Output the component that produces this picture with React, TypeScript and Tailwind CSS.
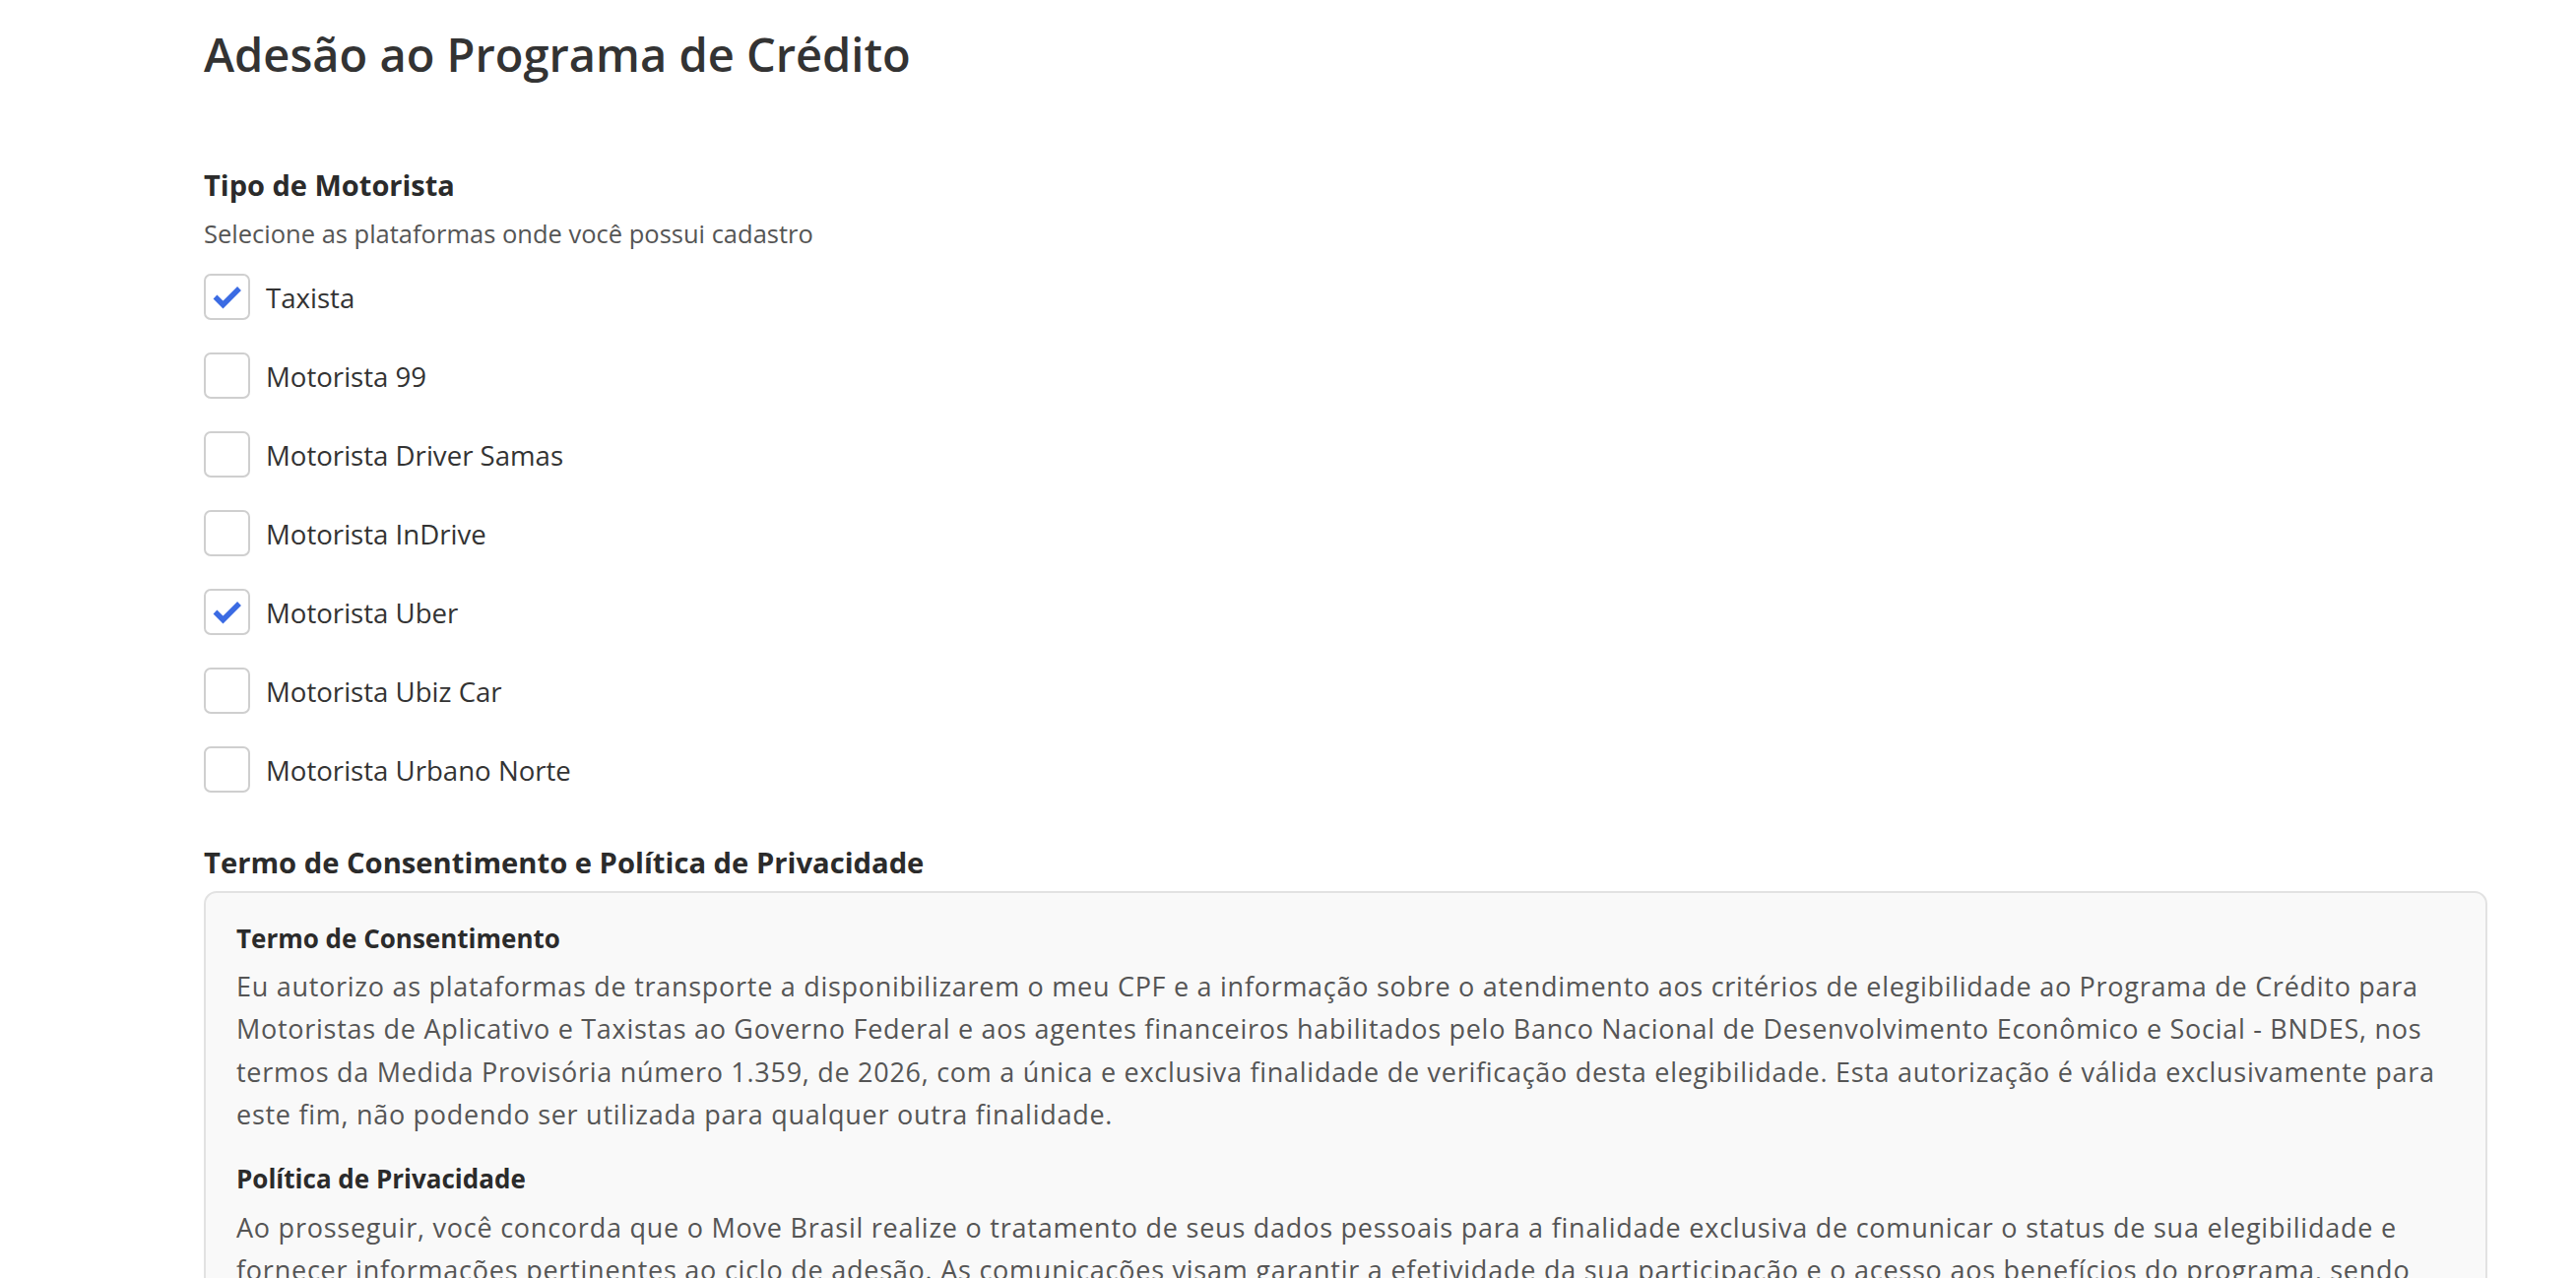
import React from "react";

const options: { label: string; checked: boolean }[] = [
  { label: "Taxista", checked: true },
  { label: "Motorista 99", checked: false },
  { label: "Motorista Driver Samas", checked: false },
  { label: "Motorista InDrive", checked: false },
  { label: "Motorista Uber", checked: true },
  { label: "Motorista Ubiz Car", checked: false },
  { label: "Motorista Urbano Norte", checked: false },
];

function Check({ checked }: { checked: boolean }) {
  return (
    <div className="w-[47px] h-[47px] shrink-0 rounded-[7px] border-[2px] border-[#cfcfcf] bg-white flex items-center justify-center">
      {checked && (
        <svg width="30" height="24" viewBox="0 0 30 24">
          <polyline
            points="2.5,11.5 10.5,19.5 27,3"
            fill="none"
            stroke="#3b6be3"
            strokeWidth="5.5"
            strokeLinecap="butt"
            strokeLinejoin="miter"
          />
        </svg>
      )}
    </div>
  );
}

export default function App() {
  return (
    <div
      className="min-h-screen bg-white text-[#333] pl-[207px] pr-[90px] pt-[26px]"
      style={{ fontFamily: "'Open Sans', Lato, sans-serif" }}
    >
      <h1 className="text-[47px] leading-[58px] font-semibold text-[#333]">
        Adesão ao Programa de Crédito
      </h1>

      <h2 className="mt-[86px] text-[29px] leading-[36px] font-bold text-[#2b2b2b]">
        Tipo de Motorista
      </h2>
      <p className="mt-[14px] text-[25.5px] leading-[34px] text-[#555]">
        Selecione as plataformas onde você possui cadastro
      </p>

      <div className="mt-[24px] flex flex-col gap-[33px]">
        {options.map((o) => (
          <label key={o.label} className="flex items-center gap-[16px]">
            <Check checked={o.checked} />
            <span className="text-[27.6px] leading-[34px] text-[#333]">{o.label}</span>
          </label>
        ))}
      </div>

      <h2 className="mt-[53px] text-[29.2px] leading-[36px] font-bold text-[#2b2b2b]">
        Termo de Consentimento e Política de Privacidade
      </h2>

      <div className="mt-[11px] rounded-[13px] border-[2px] border-[#e2e2e2] bg-[#f9f9f9] px-[31px] pt-[29px] pb-[40px] overflow-hidden">
        <h3 className="text-[26px] leading-[34px] font-bold text-[#2b2b2b]">
          Termo de Consentimento
        </h3>
        <p className="mt-[10px] text-[27px] leading-[43.4px] tracking-[0.72px] text-[#555] whitespace-nowrap">
          Eu autorizo as plataformas de transporte a disponibilizarem o meu CPF e a informação sobre o atendimento aos critérios de elegibilidade ao Programa de Crédito para
          <br />
          Motoristas de Aplicativo e Taxistas ao Governo Federal e aos agentes financeiros habilitados pelo Banco Nacional de Desenvolvimento Econômico e Social - BNDES, nos
          <br />
          termos da Medida Provisória número 1.359, de 2026, com a única e exclusiva finalidade de verificação desta elegibilidade. Esta autorização é válida exclusivamente para
          <br />
          este fim, não podendo ser utilizada para qualquer outra finalidade.
        </p>
        <h3 className="mt-[26px] text-[26px] leading-[34px] font-bold text-[#2b2b2b]">
          Política de Privacidade
        </h3>
        <p className="mt-[11px] text-[27px] leading-[43.4px] tracking-[0.76px] text-[#555] whitespace-nowrap">
          Ao prosseguir, você concorda que o Move Brasil realize o tratamento de seus dados pessoais para a finalidade exclusiva de comunicar o status de sua elegibilidade e
          <br />
          fornecer informações pertinentes ao ciclo de adesão. As comunicações visam garantir a efetividade da sua participação e o acesso aos benefícios do programa, sendo
          <br />
          vedada a utilização dos dados para quaisquer outras finalidades.
        </p>
      </div>
    </div>
  );
}
